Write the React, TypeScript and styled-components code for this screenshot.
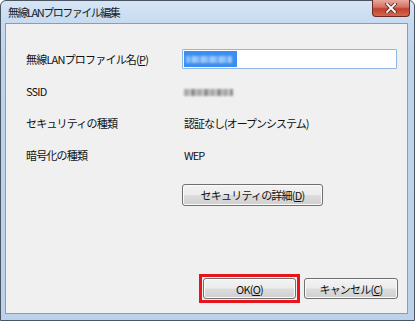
import React from "react";
import styled, { createGlobalStyle } from "styled-components";

const Global = createGlobalStyle`
  html, body { margin: 0; padding: 0; background: #ffffff; }
  body { font-family: "Noto Sans CJK JP", "Noto Sans", sans-serif; }
`;

const Window = styled.div`
  box-sizing: border-box;
  width: 415px;
  height: 321px;
  display: flex;
  flex-direction: column;
  border: 1px solid #4a5563;
  border-radius: 6px 6px 0 0;
  background: linear-gradient(180deg, #d6e5f5 0px, #c7daef 22px, #bed4ec 60px, #bcd2eb 100%);
  padding: 0 6px 6px 4px;
`;

const TitleBar = styled.div`
  height: 22px;
  display: flex;
  align-items: flex-start;
  flex-shrink: 0;
`;

const Title = styled.div`
  margin: 3px 0 0 3px;
  font-size: 11px;
  letter-spacing: -1.5px;
  line-height: 16px;
  color: #141c2b;
`;

const CloseButton = styled.div`
  margin-left: auto;
  margin-top: -1px;
  margin-right: -2px;
  width: 38px;
  height: 17px;
  box-sizing: border-box;
  border: 1px solid #6b2a24;
  border-top: none;
  border-radius: 0 0 4px 4px;
  background: linear-gradient(180deg, #e7a99e 0%, #d3705f 45%, #c2402f 55%, #d5684f 100%);
  display: flex;
  align-items: center;
  justify-content: center;
`;

const Client = styled.div`
  flex: 1;
  box-sizing: border-box;
  border: 1px solid #8d9db1;
  background: #f0f0f0;
  display: flex;
  flex-direction: column;
  padding: 19px 9px 10px 20px;
`;

const Form = styled.div`
  display: grid;
  grid-template-columns: 156px 1fr;
  grid-auto-rows: 32px;
  align-items: center;
`;

const Label = styled.div`
  font-size: 11px;
  letter-spacing: -0.8px;
  color: #111111;
  line-height: 16px;
`;

const Value = styled.div`
  font-size: 11px;
  letter-spacing: -1px;
  color: #111111;
  line-height: 16px;
  padding-left: 2px;
`;

const TextBox = styled.div`
  box-sizing: border-box;
  width: 215px;
  height: 20px;
  border: 1px solid #8fb6e0;
  border-radius: 1px;
  background: #ffffff;
  padding: 1px;
  display: flex;
`;

const Selection = styled.div`
  width: 53px;
  height: 16px;
  background: #3a8ef2;
  display: flex;
  align-items: center;
  padding-left: 2px;
  box-sizing: border-box;
`;

const Blur = styled.span<{ $w: number; $dark?: boolean }>`
  display: inline-block;
  width: ${(p) => p.$w}px;
  height: 7px;
  background: ${(p) =>
    p.$dark
      ? "repeating-linear-gradient(90deg, #a9a9a9 0 5px, #d0d0d0 5px 7px, #8c8c8c 7px 11px, #c4c4c4 11px 13px)"
      : "repeating-linear-gradient(90deg, #8dc0f7 0 4px, #5ea6f5 4px 6px, #a4ccf8 6px 9px)"};
  filter: blur(0.8px);
`;

const DetailRow = styled.div`
  margin-top: 13px;
  padding-left: 156px;
  display: flex;
`;

const Button = styled.button<{ $w: number }>`
  box-sizing: border-box;
  width: ${(p) => p.$w}px;
  height: ${(p) => (p.$w > 120 ? 22 : 21)}px;
  border: 1px solid #707070;
  border-radius: 3px;
  background: linear-gradient(180deg, #f3f3f3 0%, #ececec 48%, #dddddd 52%, #cfcfcf 100%);
  box-shadow: inset 0 0 0 1px #fbfbfb;
  font-family: "Noto Sans CJK JP", "Noto Sans", sans-serif;
  font-size: 11px;
  letter-spacing: -0.8px;
  color: #111111;
  padding: 0;
  line-height: 16px;
  display: flex;
  align-items: center;
  justify-content: center;
`;

const Footer = styled.div`
  margin-top: auto;
  display: flex;
  justify-content: flex-end;
  align-items: center;
  gap: 4px;
`;

const Highlight = styled.div`
  border: 3px solid #e8141c;
  padding: 1px;
  display: flex;
`;

const U = styled.span`
  text-decoration: underline;
  text-underline-offset: 1px;
`;

export default function App() {
  return (
    <>
      <Global />
      <Window>
        <TitleBar>
          <Title>無線LANプロファイル編集</Title>
          <CloseButton>
            <svg width="12" height="10" viewBox="0 0 12 10">
              <path d="M2 1 L10 9 M10 1 L2 9" stroke="#5a2a24" strokeWidth="3.4" strokeLinecap="square" />
              <path d="M2 1 L10 9 M10 1 L2 9" stroke="#ffffff" strokeWidth="1.8" strokeLinecap="square" />
            </svg>
          </CloseButton>
        </TitleBar>
        <Client>
          <Form>
            <Label>
              無線LANプロファイル名(<U>P</U>)
            </Label>
            <TextBox>
              <Selection>
                <Blur $w={46} />
              </Selection>
            </TextBox>
            <Label>SSID</Label>
            <Value>
              <Blur $w={49} $dark />
            </Value>
            <Label>セキュリティの種類</Label>
            <Value>認証なし(オープンシステム)</Value>
            <Label>暗号化の種類</Label>
            <Value>WEP</Value>
          </Form>
          <DetailRow>
            <Button $w={141}>
              セキュリティの詳細(<U>D</U>)
            </Button>
          </DetailRow>
          <Footer>
            <Highlight>
              <Button $w={93}>
                OK(<U>O</U>)
              </Button>
            </Highlight>
            <Button $w={94}>
              キャンセル(<U>C</U>)
            </Button>
          </Footer>
        </Client>
      </Window>
    </>
  );
}
